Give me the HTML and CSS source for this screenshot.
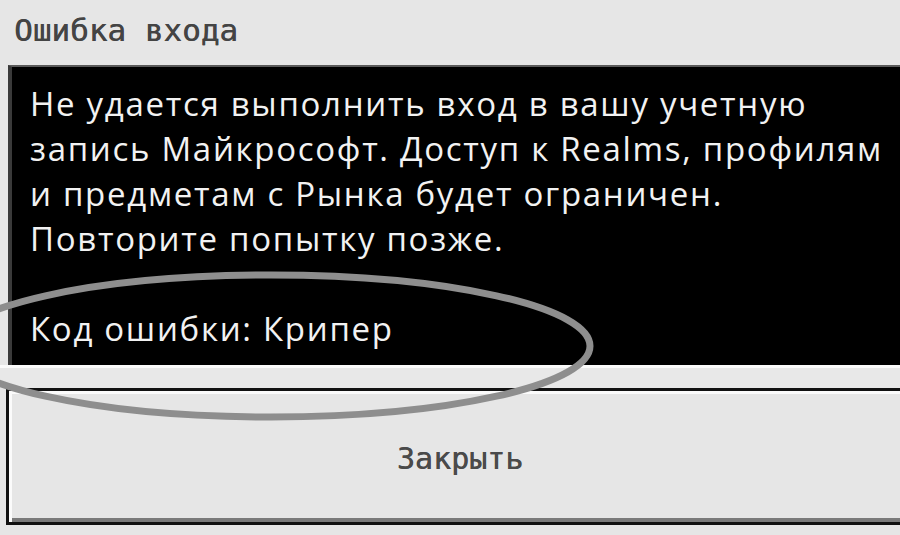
FILE: index.html
```html
<!DOCTYPE html>
<html lang="ru">
<head>
    <meta charset="UTF-8">
    <meta name="viewport" content="width=device-width, initial-scale=1.0">
    <title>Ошибка входа</title>
    <link rel="stylesheet" href="styles.css">
</head>
<body>
    <div class="screen">
        <h1 class="title">Ошибка входа</h1>

        <div class="message">
            <p>Не удается выполнить вход в вашу учетную<br>
               запись Майкрософт. Доступ к Realms, профилям<br>
               и предметам с Рынка будет ограничен.<br>
               Повторите попытку позже.</p>
            <p class="code">Код ошибки: Крипер</p>
        </div>

        <div class="spacer"></div>

        <button class="btn">Закрыть</button>

        <!-- marker circled around the error code -->
        <svg class="mark" width="900" height="535" viewBox="0 0 900 535">
            <ellipse cx="271" cy="346" rx="319" ry="71" fill="none" stroke="#8e8e8e" stroke-width="7"/>
        </svg>
    </div>
</body>
</html>
```

FILE: styles.css
```css
* {
    box-sizing: border-box;
    margin: 0;
    padding: 0;
}
body {
    background: #e6e6e6;
    overflow: hidden;
}
.screen {
    position: relative;
    width: 900px;
    height: 535px;
    display: flex;
    flex-direction: column;
}
.title {
    height: 65px;
    padding: 12px 0 0 14px;
    font-family: 'DejaVu Sans Mono', monospace;
    font-size: 31px;
    font-weight: normal;
    line-height: 36px;
    color: #444;
    text-shadow: 0.5px 0 0 #444;
}
.message {
    height: 300px;
    width: 910px;
    margin: 0 -10px 0 8px;
    padding: 14px 0 0 18px;
    background: #000;
    border-top: 2px solid #5a5a5a;
    border-left: 4px solid #3a3a3a;
    font-family: 'Open Sans', 'Noto Sans', sans-serif;
    font-size: 33px;
    letter-spacing: 1.7px;
    line-height: 45px;
    color: #f2f2f2;
    white-space: nowrap;
}
.message .code {
    margin-top: 45px;
}
.spacer {
    height: 23px;
    border-top: 3px solid #fafafa;
    background: #e8e8e8;
}
.btn {
    height: 137px;
    width: 920px;
    margin-left: 6px;
    background: #e6e6e6;
    border: 3px solid #111;
    box-shadow: inset 3px 3px 0 #fbfbfb, inset 0 -4px 0 #7a7a7a;
    font-family: 'DejaVu Sans Mono', monospace;
    font-size: 30px;
    color: #4a4a4a;
    text-shadow: 0.5px 0 0 #4a4a4a;
    text-align: center;
    padding-right: 12px;
    padding-top: 4px;
}
.mark {
    position: absolute;
    left: 0;
    top: 0;
    pointer-events: none;
}
```
